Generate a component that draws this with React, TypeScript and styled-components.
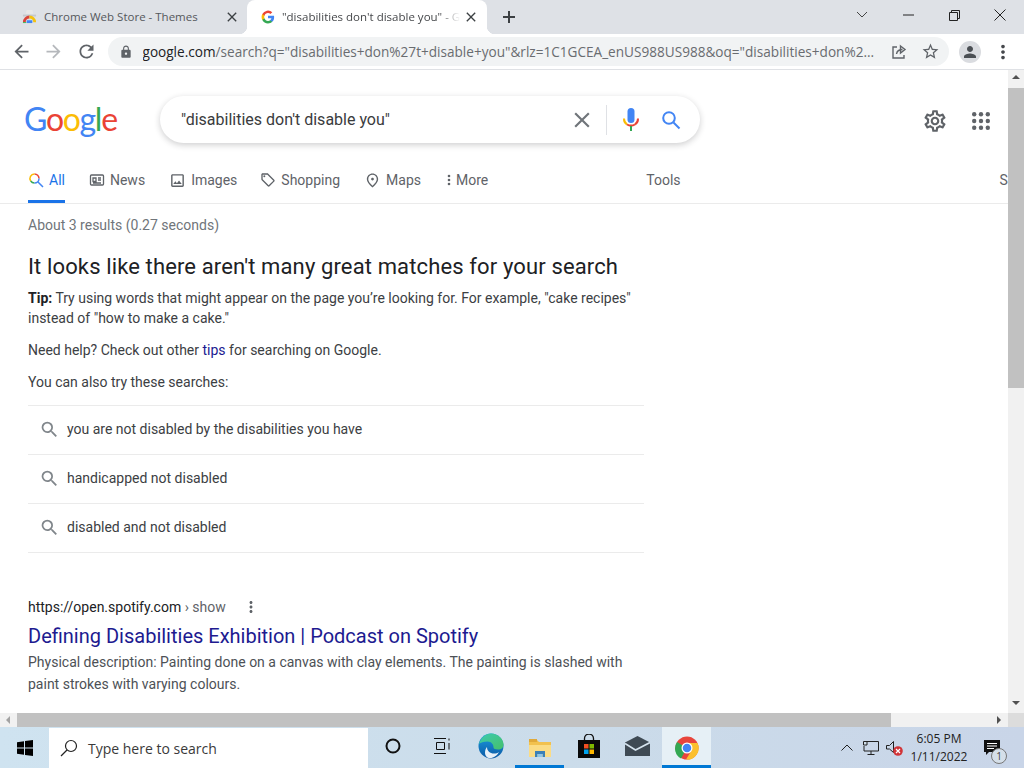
import { createGlobalStyle, styled } from "styled-components";
import {
  MdArrowBack,
  MdArrowForward,
  MdClose,
  MdLock,
  MdMoreVert,
  MdOutlineImage,
  MdOutlineLocalOffer,
  MdOutlinePlace,
  MdOutlineSettings,
  MdPerson,
  MdRefresh,
  MdSearch,
  MdStarBorder,
} from "react-icons/md";

const GlobalStyle = createGlobalStyle`
  html, body {
    margin: 0;
    padding: 0;
    overflow: hidden;
  }
  * {
    box-sizing: border-box;
  }
`;

const Screen = styled.div`
  width: 1024px;
  height: 768px;
  display: flex;
  flex-direction: column;
  background: #fff;
  overflow: hidden;
  font-family: Roboto, "Liberation Sans", sans-serif;
`;

/* ---- tab strip ---- */

const TabStrip = styled.div`
  height: 34px;
  flex: none;
  background: #dee1e6;
  display: flex;
  align-items: stretch;
  padding-left: 8px;
  font-family: "Open Sans", "Liberation Sans", sans-serif;
`;

const Tab = styled.div<{ $active?: boolean }>`
  position: relative;
  width: 240px;
  margin-right: ${(p) => (p.$active ? "0" : "-1px")};
  display: flex;
  align-items: center;
  padding: 0 8px 1px 14px;
  border-radius: 8px 8px 0 0;
  background: ${(p) => (p.$active ? "#fff" : "transparent")};
  color: ${(p) => (p.$active ? "#45474a" : "#55585c")};
  ${(p) =>
    p.$active &&
    `
    &::before, &::after {
      content: "";
      position: absolute;
      bottom: 0;
      width: 8px;
      height: 8px;
    }
    &::before {
      left: -8px;
      background: radial-gradient(circle at 0 0, #dee1e6 8px, #fff 8.5px);
    }
    &::after {
      right: -8px;
      background: radial-gradient(circle at 100% 0, #dee1e6 8px, #fff 8.5px);
    }
  `}
`;

const TabTitle = styled.span<{ $fade?: boolean }>`
  flex: 1;
  min-width: 0;
  margin-left: 7px;
  font-size: 11.5px;
  white-space: nowrap;
  overflow: hidden;
  ${(p) =>
    p.$fade &&
    `
    -webkit-mask-image: linear-gradient(90deg, #000 88%, transparent 100%);
    mask-image: linear-gradient(90deg, #000 88%, transparent 100%);
  `}
`;

const TabClose = styled.span`
  display: flex;
  margin-left: 3px;
  color: #3c4043;
  font-size: 16px;
`;

const NewTab = styled.div`
  width: 44px;
  display: flex;
  align-items: center;
  justify-content: center;
  color: #3c4043;
`;

const Caption = styled.div`
  margin-left: auto;
  display: flex;
  padding-right: 1px;
`;

const CaptionButton = styled.div`
  width: 46px;
  height: 30px;
  display: flex;
  align-items: center;
  justify-content: center;
`;

/* ---- address bar ---- */

const Toolbar = styled.div`
  height: 36px;
  flex: none;
  display: flex;
  align-items: center;
  padding: 0 10px 0 5px;
  border-bottom: 1px solid #dfe1e5;
  color: #5f6368;
  font-size: 21px;
`;

const NavButton = styled.div<{ $dim?: boolean }>`
  width: 32.5px;
  display: flex;
  justify-content: center;
  color: ${(p) => (p.$dim ? "#b5b8bc" : "#5f6368")};
`;

const Omnibox = styled.div`
  flex: 1;
  height: 29px;
  margin-left: 5px;
  display: flex;
  align-items: center;
  padding: 0 9px 0 11px;
  border-radius: 15px;
  background: #f1f3f4;
  font-family: "Open Sans", "Liberation Sans", sans-serif;
`;

const LockIcon = styled(MdLock)`
  font-size: 14px;
  flex: none;
  color: #5f6368;
`;

const Url = styled.div`
  flex: 1;
  min-width: 0;
  margin-left: 10px;
  font-size: 13.6px;
  color: #696c70;
  white-space: nowrap;
  overflow: hidden;
  b {
    font-weight: 400;
    color: #202124;
  }
`;

const OmniIcon = styled.div`
  display: flex;
  margin-left: 14px;
  color: #5f6368;
`;

const Avatar = styled.div`
  width: 22px;
  height: 22px;
  margin-left: 10px;
  border-radius: 50%;
  background: #dadce0;
  display: flex;
  align-items: center;
  justify-content: center;
  font-size: 18px;
  color: #4b4f54;
`;

const MenuDots = styled.div`
  display: flex;
  margin-left: 11px;
  font-size: 22px;
  color: #45484c;
`;

/* ---- page and scrollbars ---- */

const Viewport = styled.div`
  flex: 1;
  min-height: 0;
  display: grid;
  grid-template-columns: 1fr 16px;
  grid-template-rows: 1fr 14px;
`;

const Page = styled.main`
  min-width: 0;
  overflow: hidden;
  color: #202124;
`;

const VScroll = styled.div`
  background: #f1f1f1;
  display: flex;
  flex-direction: column;
  align-items: center;
  padding-top: 5px;
`;

const VThumb = styled.div`
  width: 100%;
  height: 300px;
  margin-top: 9px;
  background: #c1c1c1;
`;

const Arrow = styled.div<{ $dir: "up" | "down" | "left" | "right" }>`
  width: 0;
  height: 0;
  flex: none;
  border-style: solid;
  border-color: transparent;
  ${(p) =>
    p.$dir === "up"
      ? "border-width: 0 4px 4px; border-bottom-color: #505050;"
      : p.$dir === "down"
      ? "border-width: 4px 4px 0; border-top-color: #505050; margin-top: auto; margin-bottom: 8px;"
      : p.$dir === "left"
      ? "border-width: 4px 4px 4px 0; border-right-color: #a3a3a3;"
      : "border-width: 4px 0 4px 4px; border-left-color: #505050; margin-left: auto;"}
`;

const HScroll = styled.div`
  background: #f1f1f1;
  display: flex;
  align-items: center;
  padding: 0 7px 0 6px;
`;

const HThumb = styled.div`
  width: 874px;
  height: 100%;
  margin-left: 7px;
  background: #c1c1c1;
`;

const Corner = styled.div`
  background: #dcdcdc;
`;

/* ---- google header ---- */

const Header = styled.header`
  height: 90px;
  display: flex;
  align-items: flex-start;
  padding: 26px 18px 0 24px;
`;

const Logo = styled.div`
  width: 136px;
  margin-top: 5px;
  font-family: Lato, "Open Sans", sans-serif;
  font-size: 32px;
  letter-spacing: -1.3px;
  line-height: 36px;
`;

const Letter = styled.span<{ $c: string }>`
  color: ${(p) => p.$c};
`;

const SearchPill = styled.div`
  width: 540px;
  height: 47px;
  display: flex;
  align-items: center;
  padding: 0 19px 0 21px;
  border-radius: 24px;
  background: #fff;
  box-shadow: 0 2px 6px rgba(32, 33, 36, 0.22);
`;

const Query = styled.div`
  flex: 1;
  font-size: 16px;
  color: #3a3b3d;
`;

const ClearIcon = styled(MdClose)`
  font-size: 26px;
  color: #70757a;
  margin-right: 11px;
`;

const PillDivider = styled.div`
  width: 1px;
  height: 30px;
  background: #dfe1e5;
  margin-right: 15px;
`;

const HeaderTools = styled.div`
  margin: 12px 0 0 auto;
  display: flex;
  align-items: center;
  gap: 24px;
  color: #5f6368;
`;

const Nav = styled.nav`
  height: 44px;
  display: flex;
  padding: 0 0 0 28px;
  border-bottom: 1px solid #ebebeb;
  white-space: nowrap;
`;

const NavItem = styled.div<{ $active?: boolean; $gap?: number }>`
  display: flex;
  align-items: center;
  gap: 5px;
  height: 43px;
  margin-right: ${(p) => p.$gap ?? 24}px;
  font-size: 14px;
  color: ${(p) => (p.$active ? "#1a73e8" : "#5f6368")};
  border-bottom: 3px solid ${(p) => (p.$active ? "#1a73e8" : "transparent")};
  flex: none;
`;

const Content = styled.div`
  width: 620px;
  margin-left: 28px;
`;

const Stats = styled.div`
  margin-top: 13px;
  height: 17px;
  font-size: 14px;
  line-height: 17px;
  color: #70757a;
`;

const Heading = styled.h2`
  margin: 19px 0 0;
  font-size: 22px;
  font-weight: 400;
  letter-spacing: 0.13px;
  line-height: 28px;
  color: #202124;
`;

const Para = styled.p<{ $top: number }>`
  margin: ${(p) => p.$top}px 0 0;
  font-size: 14px;
  line-height: 20px;
  color: #3c4043;
  a {
    color: #201a90;
    text-decoration: none;
  }
  b {
    font-weight: 700;
    color: #202124;
  }
`;

const Suggestions = styled.div`
  margin-top: 13px;
  width: 616px;
  border-bottom: 1px solid #ebebeb;
`;

const Suggestion = styled.div`
  height: 49px;
  display: flex;
  align-items: center;
  gap: 7px;
  padding: 0 0 2px 11px;
  border-top: 1px solid #ebebeb;
  font-size: 14px;
  color: #3c4043;
`;

const SuggestionIcon = styled(MdSearch)`
  font-size: 21px;
  color: #80868b;
  flex: none;
`;

const Result = styled.article`
  margin-top: 45px;
`;

const Cite = styled.div`
  display: flex;
  align-items: center;
  height: 18px;
  font-size: 14px;
  color: #202124;
  span {
    color: #5f6368;
    white-space: pre;
  }
`;

const CiteDots = styled(MdMoreVert)`
  font-size: 18px;
  margin-left: 16px;
  color: #5f6368;
`;

const ResultTitle = styled.a`
  display: block;
  margin-top: 7px;
  font-size: 20px;
  line-height: 26px;
  color: #201a90;
`;

const Snippet = styled.p`
  margin: 2px 0 0;
  font-size: 14px;
  line-height: 22px;
  color: #4d5156;
`;

/* ---- taskbar ---- */

const Taskbar = styled.footer`
  height: 41px;
  flex: none;
  display: flex;
  align-items: stretch;
  background: linear-gradient(90deg, #cfe3f0 0%, #cbdcea 55%, #c9d5e8 100%);
  color: #111;
  font-family: "Open Sans", "Liberation Sans", sans-serif;
`;

const StartButton = styled.div`
  width: 49px;
  display: flex;
  align-items: center;
  justify-content: center;
`;

const TaskSearch = styled.div`
  width: 319px;
  margin-top: 1px;
  display: flex;
  align-items: center;
  gap: 10px;
  padding-left: 11px;
  background: #fff;
  font-size: 14px;
  color: #3a3a3a;
`;

const TaskApp = styled.div<{ $open?: boolean; $focused?: boolean }>`
  width: 49px;
  display: flex;
  align-items: center;
  justify-content: center;
  background: ${(p) => (p.$focused ? "#e6f0f6" : "transparent")};
  border-bottom: 3px solid ${(p) => (p.$open ? "#0078d4" : "transparent")};
  padding-top: ${(p) => (p.$open ? "3px" : "0")};
`;

const Tray = styled.div`
  margin-left: auto;
  display: flex;
  align-items: center;
  padding-right: 24px;
`;

const TrayIcon = styled.div`
  width: 24px;
  display: flex;
  justify-content: center;
`;

const Clock = styled.div`
  width: 64px;
  padding-top: 1px;
  text-align: center;
  font-size: 12px;
  line-height: 18px;
  white-space: nowrap;
  color: #222;
`;

const Notify = styled.div`
  position: relative;
  margin-left: 13px;
  display: flex;
`;

const NotifyBadge = styled.span`
  position: absolute;
  left: 7px;
  top: 8px;
  width: 16px;
  height: 16px;
  border-radius: 50%;
  border: 1px solid #777;
  background: #d5dfe9;
  font-size: 10px;
  line-height: 14px;
  text-align: center;
  color: #444;
`;

/* ---- drawings ---- */

const GoogleG = () => (
  <svg width="14" height="14" viewBox="0 0 48 48">
    <path fill="#4285f4" d="M45 24.5c0-1.6-.1-3-.4-4.5H24v8.5h11.8a10 10 0 0 1-4.4 6.6v5.5h7.1C42.700 36.700 45 31.100 45 24.500z" />
    <path fill="#34a853" d="M24 46c5.900 0 10.900-2 14.500-5.300l-7.100-5.500c-2 1.300-4.500 2.100-7.400 2.100-5.700 0-10.500-3.800-12.200-9H4.500v5.700A22 22 0 0 0 24 46z" />
    <path fill="#fbbc05" d="M11.800 28.300a13 13 0 0 1 0-8.500v-5.700H4.500a22 22 0 0 0 0 19.900z" />
    <path fill="#ea4335" d="M24 10.700c3.200 0 6.100 1.100 8.400 3.300l6.300-6.300A22 22 0 0 0 4.500 14.100l7.300 5.700c1.700-5.200 6.500-9.100 12.200-9.100z" />
  </svg>
);

const StoreFavicon = () => (
  <svg width="15" height="15" viewBox="0 0 16 16">
    <path fill="#e8e8e8" d="M5 1h6l1 4H4z" />
    <path fill="#8a8f94" d="M1 6h14v2H1z" opacity=".3" />
    <path fill="#d9453a" d="M1 14a7 7 0 0 1 7-7v3a4 4 0 0 0-4 4z" />
    <path fill="#f4c20d" d="M8 7a7 7 0 0 1 7 7h-3a4 4 0 0 0-4-4z" />
    <path fill="#3cba54" d="M1 14h3.500v1H1z" />
    <path fill="#4285f4" d="M5 12h6v3H5z" />
  </svg>
);

const Plus = () => (
  <svg width="14" height="14" viewBox="0 0 14 14">
    <path d="M7 1v12M1 7h12" stroke="#3c4043" strokeWidth="2" />
  </svg>
);

const CaptionChevron = () => (
  <svg width="12" height="8" viewBox="0 0 12 8">
    <path d="M1 1l5 5 5-5" fill="none" stroke="#444" strokeWidth="1" />
  </svg>
);

const CaptionMin = () => (
  <svg width="11" height="2" viewBox="0 0 11 2">
    <path d="M0 1h11" stroke="#222" strokeWidth="1" />
  </svg>
);

const CaptionMax = () => (
  <svg width="11" height="11" viewBox="0 0 11 11">
    <path d="M.5 2.500h8v8h-8zM2.500 2.500v-2h8v8h-2" fill="none" stroke="#222" strokeWidth="1" />
  </svg>
);

const CaptionX = () => (
  <svg width="12" height="12" viewBox="0 0 12 12">
    <path d="M.5.500l11 11M11.500.500l-11 11" stroke="#222" strokeWidth="1" />
  </svg>
);

const ShareIcon = () => (
  <svg width="16" height="16" viewBox="0 0 16 16" fill="none" stroke="#5f6368" strokeWidth="1.4">
    <path d="M6 3H2v11h11v-3" />
    <path d="M5.500 10c.5-3 3-4.500 6-4.500M9.500 2l4.500 3.500L9.500 9z" />
  </svg>
);

const PillMic = () => (
  <svg width="18" height="24" viewBox="0 0 18 24" style={{ marginRight: 21 }}>
    <rect x="5.500" y="0" width="7" height="15" rx="3.500" fill="#4285f4" />
    <path d="M2 10.500a7 7 0 0 0 3 6" fill="none" stroke="#fbbc05" strokeWidth="2" />
    <path d="M16 10.500a7 7 0 0 1-3 6" fill="none" stroke="#ea4335" strokeWidth="2" />
    <path d="M5 16.500c2.500 1.400 5.500 1.400 8 0" fill="none" stroke="#ea4335" strokeWidth="2" />
    <rect x="8" y="18" width="2" height="5" fill="#34a853" />
  </svg>
);

const PillSearch = () => (
  <svg width="20" height="20" viewBox="0 0 20 20" fill="none" stroke="#4285f4" strokeWidth="2">
    <circle cx="8" cy="8" r="5.800" />
    <path d="M12.500 12.500l6 6" />
  </svg>
);

const AppsDots = () => (
  <svg width="18" height="18" viewBox="0 0 18 18" fill="#5f6368">
    {[2.2, 9, 15.8].map((y) =>
      [2.2, 9, 15.8].map((x) => <circle key={`${x}-${y}`} cx={x} cy={y} r="2.200" />)
    )}
  </svg>
);

const AllIcon = () => (
  <svg width="16" height="16" viewBox="0 0 16 16" fill="none" strokeWidth="1.500">
    <path d="M11 6.500a4.500 4.500 0 0 0-4.500-4.500" stroke="#ea4335" />
    <path d="M6.500 2a4.500 4.500 0 0 0-3.800 7" stroke="#fbbc05" />
    <path d="M2.700 9a4.500 4.500 0 0 0 3.800 2" stroke="#34a853" />
    <path d="M6.500 11a4.500 4.500 0 0 0 4.500-4.500M10 10l5 5" stroke="#4285f4" />
  </svg>
);

const NewsIcon = () => (
  <svg width="16" height="16" viewBox="0 0 16 16" fill="none" stroke="#5f6368" strokeWidth="1.300">
    <rect x="1.500" y="3" width="13" height="10" rx="1" />
    <path d="M4 6h3v3.500H4zM9 6h3M9 8h3M4 11h8" />
  </svg>
);

const MoreDots = () => (
  <svg width="4" height="14" viewBox="0 0 4 14" fill="#5f6368">
    <circle cx="2" cy="3" r="1.300" />
    <circle cx="2" cy="7" r="1.300" />
    <circle cx="2" cy="11" r="1.300" />
  </svg>
);

const WinLogo = () => (
  <svg width="16" height="16" viewBox="0 0 16 16" fill="#000">
    <path d="M0 2.300l7-1v6.200H0zM8 1.100L16 0v7.500H8zM0 8.500h7v6.200l-7-1zM8 8.500h8V16l-8-1.100z" />
  </svg>
);

const TaskMagnifier = () => (
  <svg width="18" height="18" viewBox="0 0 18 18" fill="none" stroke="#222" strokeWidth="1.200">
    <circle cx="11" cy="7" r="5.500" />
    <path d="M7 11L1 17" />
  </svg>
);

const Cortana = () => (
  <svg width="18" height="18" viewBox="0 0 18 18">
    <circle cx="9" cy="9" r="6.500" fill="none" stroke="#111" strokeWidth="2" />
  </svg>
);

const TaskView = () => (
  <svg width="18" height="16" viewBox="0 0 18 16" fill="none" stroke="#111" strokeWidth="1">
    <path d="M1 .500h12M1 15.500h12M3.500 4.500h8v7h-8zM16 .500v2M16 5v6.500" />
  </svg>
);

const EdgeLogo = () => (
  <svg width="26" height="26" viewBox="0 0 26 26">
    <defs>
      <linearGradient id="edgeA" x1="0" y1="0" x2="1" y2="1">
        <stop offset="0" stopColor="#3ccbb0" />
        <stop offset="1" stopColor="#46c06a" />
      </linearGradient>
      <linearGradient id="edgeB" x1="0" y1="0" x2="0" y2="1">
        <stop offset="0" stopColor="#1b9de2" />
        <stop offset="1" stopColor="#0c59a4" />
      </linearGradient>
    </defs>
    <circle cx="13" cy="13" r="12.500" fill="url(#edgeB)" />
    <path d="M1 11C3 4 8 .500 13 .500c7 0 12.500 5.500 12.500 11 0 3-2 5-5.500 5-3 0-4.500-1-4.500-2 0-3-2-6-6-6-4 0-7 1-8.500 2.500z" fill="url(#edgeA)" />
    <path d="M9 14c0 4 3 6.500 7 6.500 2 0 3.500-.5 5-1.500-2 3.500-5 6-9 6-3 0-5-2-5-5.500C7 17 8 15 9 14z" fill="#fff" opacity=".9" />
  </svg>
);

const Explorer = () => (
  <svg width="24" height="22" viewBox="0 0 24 22">
    <path d="M1 3h8l2 2h12v15H1z" fill="#f2c14e" />
    <path d="M1 2h8v3H1z" fill="#e0a93a" />
    <path d="M1 8h22v12H1z" fill="#fbdc85" />
    <path d="M7 14h10v6h-2.500v-3h-5v3H7z" fill="#3b80b8" />
    <path d="M9.500 17h5v3h-5z" fill="#8fc6e8" />
  </svg>
);

const StoreIcon = () => (
  <svg width="24" height="24" viewBox="0 0 24 24">
    <path d="M7.500 7V4.500a4.500 4.500 0 0 1 9 0V7" fill="none" stroke="#111" strokeWidth="1.300" />
    <path d="M1 6h22v18H1z" fill="#0a0a0a" />
    <path d="M7 10h4.500v4.500H7z" fill="#f25022" />
    <path d="M12.500 10H17v4.500h-4.500z" fill="#7fba00" />
    <path d="M7 15.500h4.500V20H7z" fill="#00a4ef" />
    <path d="M12.500 15.500H17V20h-4.500z" fill="#ffb900" />
  </svg>
);

const MailIcon = () => (
  <svg width="25" height="20" viewBox="0 0 25 20">
    <path d="M12.500 0L25 6.500V20H0V6.500z" fill="#3f4a54" />
    <path d="M0 7.500l10.500 6.500L25 6.500" fill="none" stroke="#d5e3ee" strokeWidth="1.600" />
  </svg>
);

const ChromeLogo = () => (
  <svg width="24" height="24" viewBox="0 0 48 48">
    <circle cx="24" cy="24" r="23" fill="#e8453c" />
    <path d="M24 24L12 45a23 23 0 0 1-8-33z" fill="#34a853" />
    <path d="M24 14h21a23 23 0 0 1-23 33l11-18z" fill="#fbc02d" />
    <circle cx="24" cy="24" r="11" fill="#fff" />
    <circle cx="24" cy="24" r="8.500" fill="#4285f4" />
  </svg>
);

const TrayCaret = () => (
  <svg width="12" height="7" viewBox="0 0 12 7">
    <path d="M.5 6.500L6 1l5.500 5.500" fill="none" stroke="#222" strokeWidth="1" />
  </svg>
);

const NetworkIcon = () => (
  <svg width="16" height="16" viewBox="0 0 16 16" fill="none" stroke="#222" strokeWidth="1">
    <path d="M3 1.500h12.500v9.500H1V6M8 11v3M4.500 14.500h7" />
    <path d="M.5 1.500h3.500v3.500H.5z" fill="#d0dfeb" />
  </svg>
);

const MutedIcon = () => (
  <svg width="18" height="16" viewBox="0 0 18 16">
    <path d="M.5 5.500h3L7.500 1.500v11l-4-3.500h-3z" fill="none" stroke="#222" strokeWidth="1" />
    <circle cx="12" cy="11" r="4.800" fill="#d13438" />
    <path d="M10 9l4 4M14 9l-4 4" stroke="#fff" strokeWidth="1.200" />
  </svg>
);

const NotifyIcon = () => (
  <svg width="16" height="15" viewBox="0 0 16 15">
    <path d="M0 0h16v12H5l-3 3v-3H0z" fill="#111" />
    <path d="M3 3.500h10M3 6h10M3 8.500h7" stroke="#fff" strokeWidth="1" />
  </svg>
);

const logoLetters: [string, string][] = [
  ["G", "#4285f4"],
  ["o", "#ea4335"],
  ["o", "#fbbc05"],
  ["g", "#4285f4"],
  ["l", "#34a853"],
  ["e", "#ea4335"],
];

const suggestions = [
  "you are not disabled by the disabilities you have",
  "handicapped not disabled",
  "disabled and not disabled",
];

const App = () => {
  return (
    <>
      <GlobalStyle />
      <Screen>
        <TabStrip>
          <Tab>
            <StoreFavicon />
            <TabTitle>Chrome Web Store - Themes</TabTitle>
            <TabClose><MdClose /></TabClose>
          </Tab>
          <Tab $active>
            <GoogleG />
            <TabTitle $fade>"disabilities don't disable you" - Google Search</TabTitle>
            <TabClose><MdClose /></TabClose>
          </Tab>
          <NewTab><Plus /></NewTab>
          <Caption>
            <CaptionButton><CaptionChevron /></CaptionButton>
            <CaptionButton><CaptionMin /></CaptionButton>
            <CaptionButton><CaptionMax /></CaptionButton>
            <CaptionButton><CaptionX /></CaptionButton>
          </Caption>
        </TabStrip>

        <Toolbar>
          <NavButton><MdArrowBack /></NavButton>
          <NavButton $dim><MdArrowForward /></NavButton>
          <NavButton><MdRefresh /></NavButton>
          <Omnibox>
            <LockIcon />
            <Url>
              <b>google.com</b>/search?q="disabilities+don%27t+disable+you"&amp;rlz=1C1GCEA_enUS988US988&amp;oq="disabilities+don%2...
            </Url>
            <OmniIcon><ShareIcon /></OmniIcon>
            <OmniIcon><MdStarBorder size={19} /></OmniIcon>
          </Omnibox>
          <Avatar><MdPerson /></Avatar>
          <MenuDots><MdMoreVert /></MenuDots>
        </Toolbar>

        <Viewport>
          <Page>
            <Header>
              <Logo>
                {logoLetters.map(([ch, c], i) => (
                  <Letter key={i} $c={c}>{ch}</Letter>
                ))}
              </Logo>
              <SearchPill>
                <Query>"disabilities don't disable you"</Query>
                <ClearIcon />
                <PillDivider />
                <PillMic />
                <PillSearch />
              </SearchPill>
              <HeaderTools>
                <MdOutlineSettings size={26} />
                <AppsDots />
              </HeaderTools>
            </Header>

            <Nav>
              <NavItem $active $gap={24}><AllIcon />All</NavItem>
              <NavItem><NewsIcon />News</NavItem>
              <NavItem $gap={23}><MdOutlineImage size={17} />Images</NavItem>
              <NavItem><MdOutlineLocalOffer size={16} />Shopping</NavItem>
              <NavItem $gap={26}><MdOutlinePlace size={17} />Maps</NavItem>
              <NavItem $gap={158}><MoreDots />More</NavItem>
              <NavItem $gap={319}>Tools</NavItem>
              <NavItem>SafeSearch</NavItem>
            </Nav>

            <Content>
              <Stats>About 3 results (0.27 seconds)</Stats>
              <Heading>It looks like there aren't many great matches for your search</Heading>
              <Para $top={7}>
                <b>Tip:</b> Try using words that might appear on the page you’re looking for. For example, "cake recipes" instead of "how to make a cake."
              </Para>
              <Para $top={12}>Need help? Check out other <a>tips</a> for searching on Google.</Para>
              <Para $top={12}>You can also try these searches:</Para>
              <Suggestions>
                {suggestions.map((s) => (
                  <Suggestion key={s}><SuggestionIcon />{s}</Suggestion>
                ))}
              </Suggestions>
              <Result>
                <Cite>
                  https://open.spotify.com<span> › show</span>
                  <CiteDots />
                </Cite>
                <ResultTitle>Defining Disabilities Exhibition | Podcast on Spotify</ResultTitle>
                <Snippet>
                  Physical description: Painting done on a canvas with clay elements. The painting is slashed with paint strokes with varying colours.
                </Snippet>
              </Result>
            </Content>
          </Page>

          <VScroll>
            <Arrow $dir="up" />
            <VThumb />
            <Arrow $dir="down" />
          </VScroll>

          <HScroll>
            <Arrow $dir="left" />
            <HThumb />
            <Arrow $dir="right" />
          </HScroll>
          <Corner />
        </Viewport>

        <Taskbar>
          <StartButton><WinLogo /></StartButton>
          <TaskSearch>
            <TaskMagnifier />
            Type here to search
          </TaskSearch>
          <TaskApp><Cortana /></TaskApp>
          <TaskApp><TaskView /></TaskApp>
          <TaskApp><EdgeLogo /></TaskApp>
          <TaskApp $open><Explorer /></TaskApp>
          <TaskApp><StoreIcon /></TaskApp>
          <TaskApp><MailIcon /></TaskApp>
          <TaskApp $open $focused><ChromeLogo /></TaskApp>
          <Tray>
            <TrayIcon><TrayCaret /></TrayIcon>
            <TrayIcon><NetworkIcon /></TrayIcon>
            <TrayIcon><MutedIcon /></TrayIcon>
            <Clock>6:05 PM<br />1/11/2022</Clock>
            <Notify>
              <NotifyIcon />
              <NotifyBadge>1</NotifyBadge>
            </Notify>
          </Tray>
        </Taskbar>
      </Screen>
    </>
  );
};

export default App;
